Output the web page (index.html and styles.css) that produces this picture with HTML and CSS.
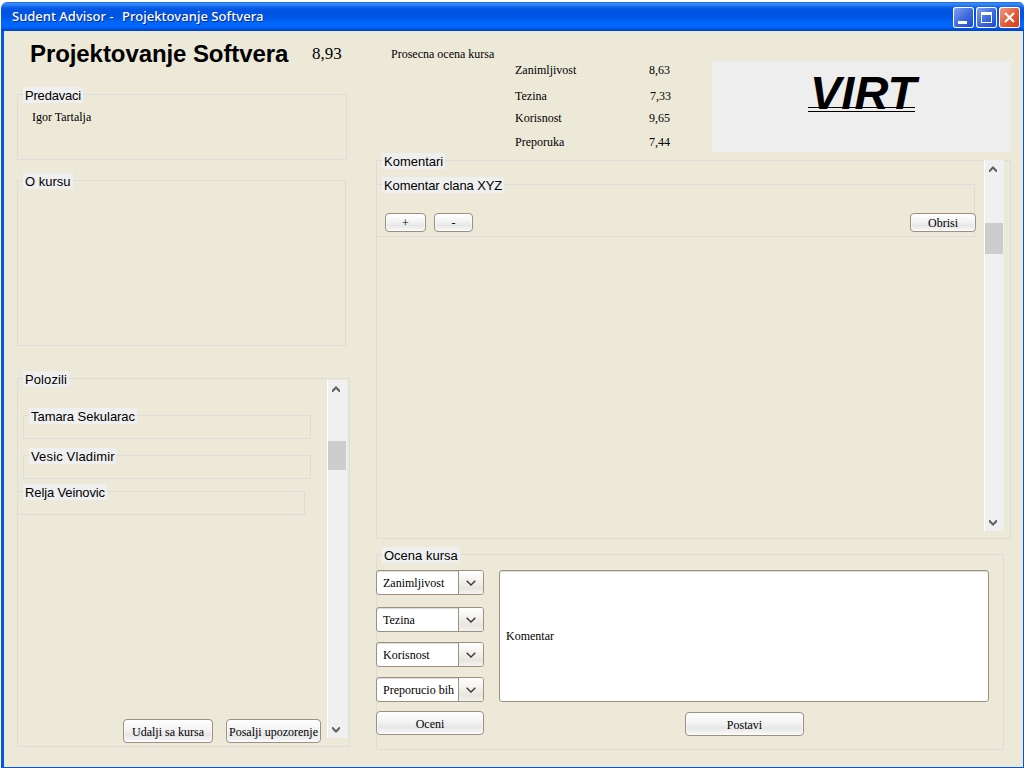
FILE: index.html
```html
<!DOCTYPE html>
<html lang="sr">
<head>
<meta charset="utf-8">
<title>Sudent Advisor - Projektovanje Softvera</title>
<link rel="stylesheet" href="styles.css">
</head>
<body>
<div class="window">
  <header class="titlebar">
    <div class="caption"><span class="app-name">Sudent Advisor -</span><span class="doc-name">Projektovanje Softvera</span></div>
    <div class="controls">
      <svg class="ctl" viewBox="0 0 21 21"><rect x="5" y="14" width="9" height="3" fill="#fff"/></svg>
      <svg class="ctl" viewBox="0 0 21 21"><path d="M5 5h11v11H5z M6 8v7h9V8z" fill="#fff" fill-rule="evenodd"/></svg>
      <svg class="ctl ctl-close" viewBox="0 0 21 21"><path d="M6 6l9 9M15 6l-9 9" stroke="#fff" stroke-width="2.2"/></svg>
    </div>
  </header>
  <main class="client">
    <div class="left">
      <div class="heading"><h1>Projektovanje Softvera</h1><span class="score">8,93</span></div>
      <section class="group lecturers"><span class="legend w60">Predavaci</span><p class="name">Igor Tartalja</p></section>
      <section class="group about"><span class="legend w50">O kursu</span></section>
      <section class="group passed">
        <div class="passed-main">
          <span class="legend w46">Polozili</span>
          <div class="students">
            <div class="group student"><span class="legend w108">Tamara Sekularac</span></div>
            <div class="group student second"><span class="legend w87">Vesic Vladimir</span></div>
            <div class="group student third"><span class="legend w84">Relja Veinovic</span></div>
          </div>
          <div class="passed-actions"><button class="btn remove">Udalji sa kursa</button><button class="btn warn">Posalji upozorenje</button></div>
        </div>
        <div class="scroll scroll-left">
          <svg viewBox="0 0 8 6"><path d="M0 4L4 0l4 4v2H7L4 3 1 6H0z"/></svg>
          <i class="thumb"></i>
          <svg viewBox="0 0 8 6"><path d="M0 2l4 4 4-4V0H7L4 3 1 0H0z"/></svg>
        </div>
      </section>
    </div>
    <div class="right">
      <div class="summary">
        <span class="average">Prosecna ocena kursa</span>
        <dl class="ratings">
          <dt>Zanimljivost</dt><dd>8,63</dd>
          <dt>Tezina</dt><dd class="shift">7,33</dd>
          <dt>Korisnost</dt><dd>9,65</dd>
          <dt>Preporuka</dt><dd>7,44</dd>
        </dl>
        <div class="brand"><span class="brand-text">VIRT</span></div>
      </div>
      <section class="group comments">
        <div class="comments-main">
          <span class="legend w63">Komentari</span>
          <div class="group comment">
            <span class="legend w122">Komentar clana XYZ</span>
            <div class="comment-actions"><button class="btn plus">+</button><button class="btn minus">-</button><button class="btn delete">Obrisi</button></div>
          </div>
        </div>
        <div class="scroll scroll-right">
          <svg viewBox="0 0 8 6"><path d="M0 4L4 0l4 4v2H7L4 3 1 6H0z"/></svg>
          <i class="thumb"></i>
          <svg viewBox="0 0 8 6"><path d="M0 2l4 4 4-4V0H7L4 3 1 0H0z"/></svg>
        </div>
      </section>
      <section class="group rate">
        <span class="legend w78">Ocena kursa</span>
        <div class="rate-body">
          <div class="selects">
            <div class="select"><span>Zanimljivost</span><b><svg viewBox="0 0 10 6"><path d="M.7.7L5 5 9.3.7"/></svg></b></div>
            <div class="select second-select"><span>Tezina</span><b><svg viewBox="0 0 10 6"><path d="M.7.7L5 5 9.3.7"/></svg></b></div>
            <div class="select"><span>Korisnost</span><b><svg viewBox="0 0 10 6"><path d="M.7.7L5 5 9.3.7"/></svg></b></div>
            <div class="select"><span>Preporucio bih</span><b><svg viewBox="0 0 10 6"><path d="M.7.7L5 5 9.3.7"/></svg></b></div>
            <button class="btn submit">Oceni</button>
          </div>
          <div class="compose"><div class="field">Komentar</div><button class="btn post">Postavi</button></div>
        </div>
      </section>
    </div>
  </main>
</div>
</body>
</html>
```
FILE: styles.css
```css
* { box-sizing: border-box; }
body { margin: 0; width: 1024px; height: 768px; overflow: hidden; background: #fff; font: 12px/16px "Liberation Serif", "Times New Roman", serif; color: #000; }
h1, p, dl, dd { margin: 0; }
svg { display: block; }
.window { margin: 2px 0 0 1px; width: 1023px; height: 766px; display: flex; flex-direction: column; }
.titlebar { height: 29px; flex: none; display: flex; justify-content: space-between; border-radius: 6px 5px 0 0; padding: 5px 4px 0 11px; background: linear-gradient(#0a53d8 0, #3c8cf8 1px, #2a80f5 3px, #0a5be5 6px, #0054e3 9px, #0055e5 15px, #0066fc 20px, #0068ff 25px, #0050dc 27px, #0040c4 29px); }
.caption { display: flex; gap: 8px; font: 500 13px/19px "Noto Sans", sans-serif; color: #fff; text-shadow: 1px 1px 0 #0a2a8c; white-space: nowrap; }
.app-name { width: 102px; }
.doc-name { letter-spacing: .04px; }
.controls { display: flex; gap: 2px; }
.ctl { width: 21px; height: 21px; border-radius: 3px; background: linear-gradient(135deg, #86a6f2, #3d68dc 55%, #1447cf); box-shadow: inset 0 0 0 1px #fff; }
.ctl-close { background: linear-gradient(135deg, #f2a08a, #e25a38 55%, #d63c0c); }
.client { flex: 1; min-height: 0; display: flex; gap: 26px; border: solid #0055e5; border-width: 0 1px 1px 3px; padding-left: 13px; background: #ece9d8; }
.left { width: 333px; flex: none; display: flex; flex-direction: column; }
.heading { height: 63px; flex: none; display: flex; padding: 9px 0 0 13px; }
h1 { width: 282px; font: bold 24px/28px "Liberation Sans", Arial, sans-serif; letter-spacing: -.08px; white-space: nowrap; }
.score { font-size: 17px; line-height: 28px; }
.group { border: 1px solid #dcdcdc; }
.legend { display: block; height: 16px; margin: -8px 0 0 5px; padding-left: 2px; background: #efefef; font: 13px/18px "Liberation Sans", Arial, sans-serif; white-space: nowrap; }
.w46 { width: 46px; letter-spacing: .1px; }
.w50 { width: 50px; }
.w60 { width: 60px; letter-spacing: -.2px; }
.w63 { width: 63px; }
.w78 { width: 78px; }
.w84 { width: 84px; letter-spacing: -.12px; }
.w87 { width: 87px; letter-spacing: .15px; }
.w108 { width: 108px; letter-spacing: -.05px; }
.w122 { width: 122px; letter-spacing: -.1px; }
.lecturers { width: 330px; height: 66px; flex: none; }
.name { padding: 6px 0 0 14px; }
.about { width: 329px; height: 166px; flex: none; margin-top: 20px; }
.passed { width: 333px; height: 369px; flex: none; margin-top: 32px; display: flex; }
.passed-main { width: 309px; display: flex; flex-direction: column; }
.students { padding-top: 28px; flex: 1; }
.student { width: 288px; height: 24px; margin-left: 5px; }
.second { margin-top: 16px; }
.third { margin: 12px 0 0 -1px; }
.passed-actions { display: flex; gap: 13px; padding: 0 0 3px 105px; }
.btn { flex: none; padding: 0; border: 1px solid #9c9082; border-radius: 4px; background: linear-gradient(#fff, #f3f3f3 45%, #e7e7e7 68%, #fafafa); box-shadow: inset 0 0 0 1px rgba(255, 255, 255, .5); color: #000; font: 12px/16px "Liberation Serif", "Times New Roman", serif; white-space: nowrap; }
.passed-actions .btn, .post { padding-top: 2px; }
.remove { width: 90px; height: 24px; }
.warn { width: 95px; height: 24px; }
.scroll { width: 20px; flex: none; border-left: 1px solid #fff; background: #f0f0f0; display: flex; flex-direction: column; }
.scroll svg { width: 8px; height: 6px; margin-left: 4px; fill: #606060; }
.thumb { display: block; width: 18px; background: #cdcdcd; }
.scroll-left { height: 358px; margin-top: 1px; padding: 6px 0 5px; }
.scroll-left .thumb { height: 29px; margin: 49px 0 auto; }
.scroll-right { height: 371px; margin-top: -1px; padding: 6px 0 5px; }
.scroll-right .thumb { height: 31px; margin: 51px 0 auto; }
.right { width: 635px; flex: none; }
.summary { height: 129px; display: flex; }
.average { width: 139px; padding: 15px 0 0 15px; white-space: nowrap; }
.ratings { display: grid; grid-template-columns: 134px 63px; grid-template-rows: 26px 22px 24px 16px; padding-top: 31px; }
.shift { padding-left: 1px; }
.brand { width: 299px; height: 91px; margin-top: 30px; padding: 6px 0 0 96px; background: #eee; }
.brand-text { display: block; position: relative; width: 107px; height: 52px; padding-left: 2px; font: italic bold 47px/52px "Liberation Sans", Arial, sans-serif; }
.brand-text::after { content: ""; position: absolute; left: 0; top: 40px; width: 107px; height: 3px; border: solid #000; border-width: 1px 0; }
.comments { height: 379px; display: flex; }
.comments-main { width: 607px; }
.comment { width: 599px; height: 53px; margin: 15px 0 0 -1px; }
.comment-actions { display: flex; gap: 8px; width: 599px; padding: 20px 0 0 8px; }
.comment-actions .btn { height: 19px; }
.plus { width: 41px; }
.minus { width: 39px; }
.delete { width: 66px; margin-left: auto; }
.rate { width: 628px; height: 196px; margin-top: 15px; }
.rate-body { display: flex; gap: 15px; margin: 7px 0 0 -1px; }
.selects { width: 108px; display: flex; flex-direction: column; gap: 10px; }
.select { display: flex; height: 25px; border: 1px solid #9c9082; border-radius: 3px; background: #fff; box-shadow: inset 0 1px #ddd; line-height: 25px; white-space: nowrap; overflow: hidden; }
.second-select { margin-top: 2px; }
.select span { width: 81px; padding-left: 6px; }
.select b { flex: 1; border-left: 1px solid #9c9082; padding: 9px 0 0 7px; background: linear-gradient(#fff, #eeece6 60%, #e8e5df 75%, #f5f3ef); }
.select svg { width: 10px; height: 6px; fill: none; stroke: #333; stroke-width: 1.3; }
.submit { height: 24px; margin-top: -1px; padding-top: 2px; }
.compose { width: 490px; }
.field { height: 132px; border: 1px solid #9c9082; border-radius: 3px; background: #fff; box-shadow: inset 0 1px #ddd; padding-left: 6px; line-height: 130px; }
.post { display: block; width: 119px; height: 24px; margin: 10px 0 0 186px; }
```
